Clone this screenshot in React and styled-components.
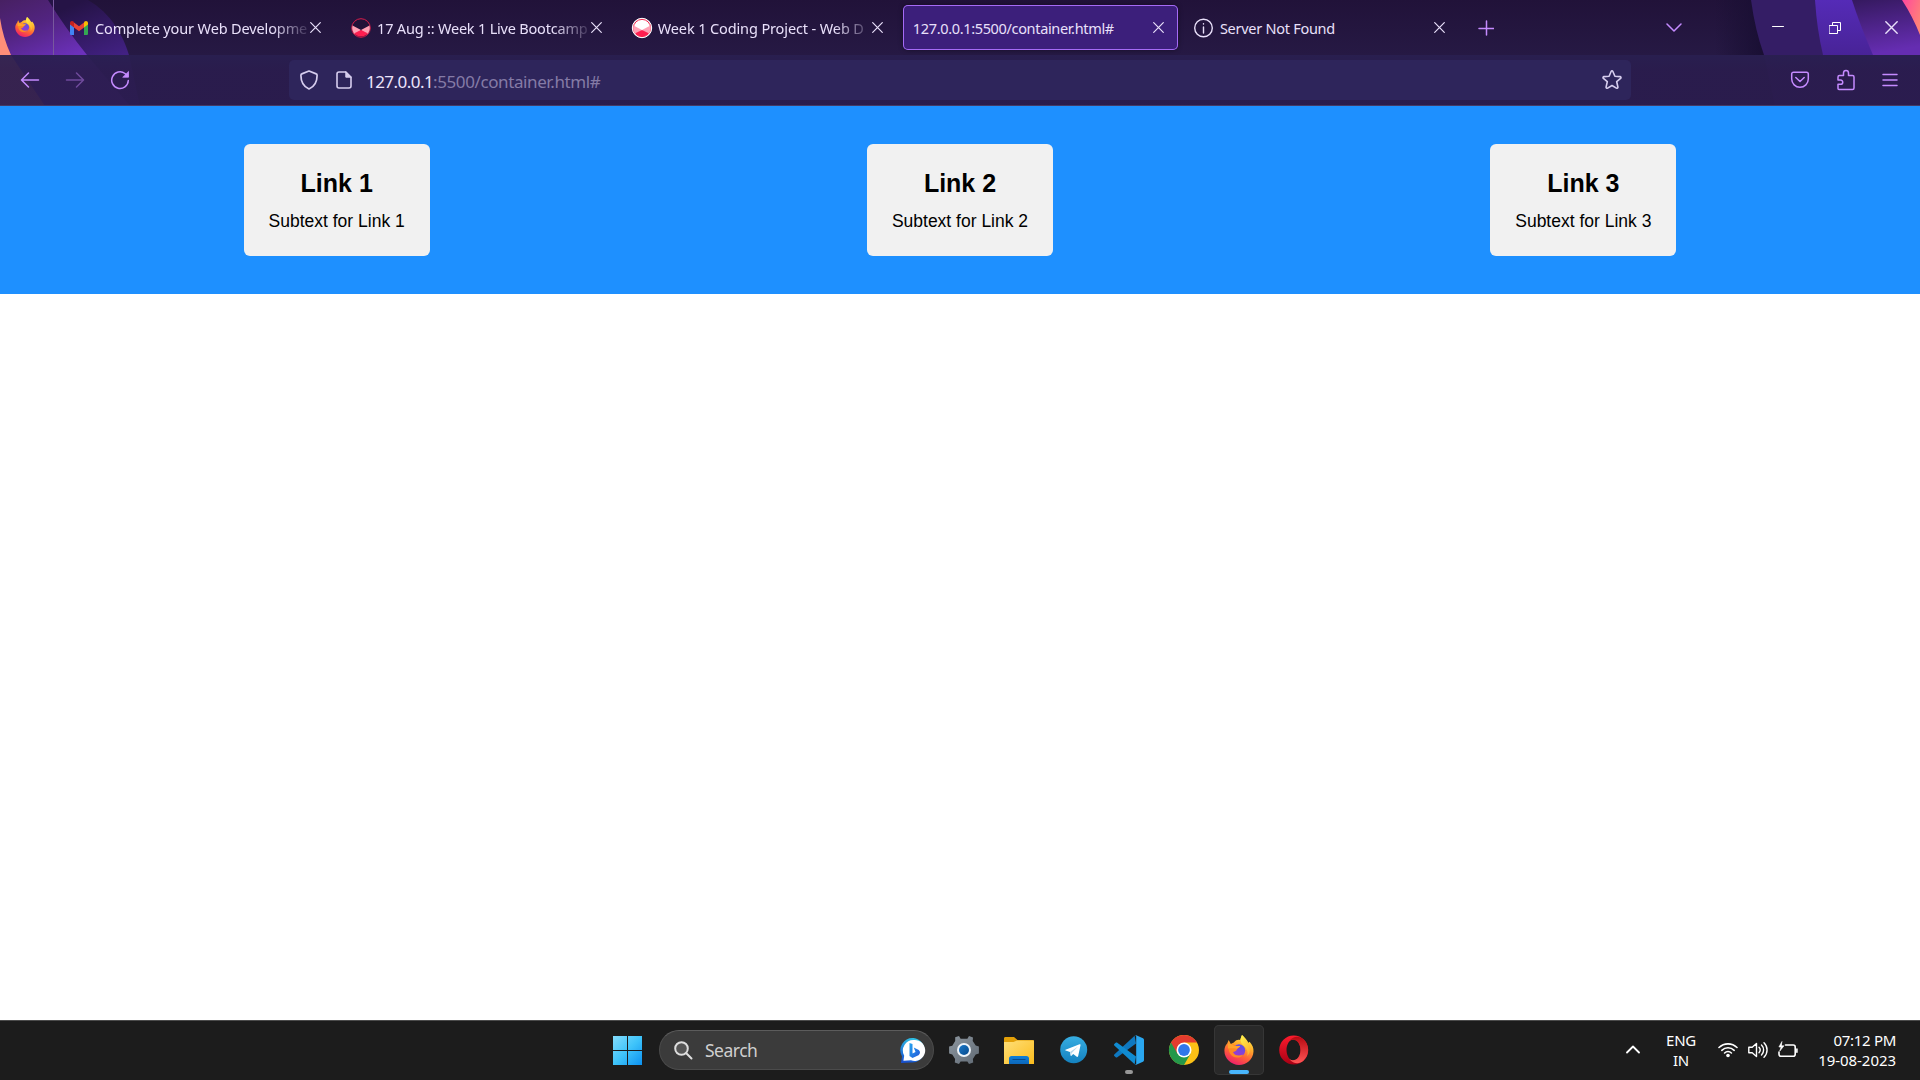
import React from "react";
import styled, { createGlobalStyle } from "styled-components";

const GlobalStyle = createGlobalStyle`
  * { box-sizing: border-box; }
  html, body { margin: 0; padding: 0; background: #fff; overflow: hidden; }
  body { font-family: "Noto Sans", "Open Sans", sans-serif; }
`;

const Screen = styled.div`
  width: 1920px;
  height: 1080px;
  display: flex;
  flex-direction: column;
  background: #fff;
`;

/* ---------- browser chrome ---------- */

const Chrome = styled.header`
  position: relative;
  isolation: isolate;
  height: 106px;
  display: flex;
  flex-direction: column;
  background: linear-gradient(#211239 0, #261944 55px);
`;

const ThemeArt = styled.svg`
  position: absolute;
  inset: 0;
  z-index: -1;
`;

const TabStrip = styled.div`
  height: 55px;
  display: flex;
  align-items: center;
`;

const ViewButton = styled.div`
  width: 54px;
  height: 55px;
  padding: 1px 0 2px 15px;
  display: flex;
  align-items: center;
  border-right: 1px solid #78589e;
`;

const Tabs = styled.div`
  display: flex;
  gap: 6px;
  margin-left: 5.5px;
`;

const Tab = styled.div`
  width: 275.1px;
  height: 45px;
  padding: 0 9.5px 0 10px;
  display: flex;
  align-items: center;
  border-radius: 5px;
  color: #e9e0fa;
  background: ${(p) => (p.$active ? "#3c1f7b" : "transparent")};
  box-shadow: ${(p) => (p.$active ? "inset 0 0 0 1px #a56bf5, 0 0 5px rgba(0,0,0,.4)" : "none")};
`;

const TabIcon = styled.span`
  width: 20px;
  height: 20px;
  margin-right: ${(p) => p.$gap}px;
  flex: none;
  display: flex;
  align-items: center;
`;

const TabLabel = styled.span`
  flex: 1;
  min-width: 0;
  margin-right: -3px;
  overflow: hidden;
  white-space: nowrap;
  font-size: 14.5px;
  line-height: 22px;
  letter-spacing: ${(p) => p.$spacing}px;
  ${(p) => p.$fade && "mask-image: linear-gradient(to right, #000 calc(100% - 36px), rgba(0,0,0,.12));"}
`;

const TabClose = styled.span`
  width: 20px;
  flex: none;
  display: flex;
  justify-content: center;
`;

const StripControls = styled.div`
  flex: 1;
  display: flex;
  align-items: center;
`;

const Slot = styled.span`
  width: ${(p) => p.$w}px;
  margin-left: ${(p) => p.$left || 0}px;
  flex: none;
  display: flex;
  align-items: center;
  justify-content: center;
`;

const NavBar = styled.div`
  height: 51px;
  padding-left: 8px;
  display: flex;
  align-items: center;
  background: linear-gradient(to bottom, rgba(41,31,80,.94), rgba(42,28,77,.94) 16px);
  border-bottom: 1px solid #443a66;
`;

const UrlBar = styled.div`
  width: 1342px;
  height: 40px;
  margin-left: 159px;
  padding: 0 9px 0 11px;
  display: flex;
  align-items: center;
  border-radius: 5px;
  background: #2e255b;
`;

const Url = styled.span`
  flex: 1;
  margin-left: 14px;
  padding-top: 3px;
  font-size: 17px;
  line-height: 24px;
  letter-spacing: -0.4px;
  color: #857ba6;
`;

const Host = styled.span`
  letter-spacing: -0.55px;
  color: #ece4fb;
`;

/* ---------- page ---------- */

const LinkBar = styled.nav`
  height: 188px;
  padding: 38px 243.67px;
  display: flex;
  justify-content: space-between;
  background: #1e90ff;
  font-family: "Liberation Sans", Arial, sans-serif;
  color: #000;
`;

const Card = styled.a`
  width: 186px;
  height: 112px;
  padding: 25px 0;
  border-radius: 6px;
  background: #f1f1f1;
  text-align: center;
`;

const CardTitle = styled.div`
  font-size: 25px;
  line-height: 29px;
  font-weight: 700;
  margin-bottom: 13px;
`;

const CardText = styled.div`
  font-size: 17.5px;
  line-height: 20px;
  white-space: nowrap;
`;

const Page = styled.main`
  flex: 1;
  background: #fff;
`;

/* ---------- taskbar ---------- */

const TaskBar = styled.footer`
  height: 60px;
  padding-left: 603px;
  display: flex;
  align-items: center;
  background: #1c1c1c;
  box-shadow: inset 0 1px 0 #4b4b4b;
  color: #fff;
`;

const AppCell = styled.div`
  width: ${(p) => (p.$first ? 49 : 50)}px;
  height: 50px;
  margin-left: ${(p) => (p.$first ? 0 : 5)}px;
  padding-top: ${(p) => (p.$first ? 11 : 10)}px;
  display: flex;
  flex-direction: column;
  align-items: center;
  border-radius: 5px;
  background: ${(p) => (p.$active ? "#292929" : "transparent")};
  box-shadow: ${(p) => (p.$active ? "inset 0 0 0 1px #363636" : "none")};
`;

const Indicator = styled.span`
  width: ${(p) => (p.$active ? 20 : 8)}px;
  height: 4px;
  margin-top: 5px;
  border-radius: 2px;
  background: ${(p) => (p.$active ? "#48b5fb" : "#979797")};
`;

const SearchBox = styled.div`
  width: 275px;
  height: 40px;
  margin-left: 7px;
  padding: 0 7px 0 14px;
  display: flex;
  align-items: center;
  border-radius: 20px;
  border: 1px solid #4b4b4b;
  border-top-color: #5c5c5c;
  background: #3b3b3b;
`;

const SearchLabel = styled.span`
  flex: 1;
  margin-left: 12px;
  font-size: 17.5px;
  line-height: 24px;
  letter-spacing: -0.5px;
  color: #cfcfcf;
`;

const Tray = styled.div`
  margin-left: auto;
  padding-right: 24px;
  padding-bottom: 1px;
  display: flex;
  align-items: center;
  font-size: 15px;
  line-height: 20px;
`;

const TrayText = styled.div`
  width: ${(p) => p.$w}px;
  margin-left: ${(p) => p.$left}px;
  white-space: nowrap;
  letter-spacing: ${(p) => p.$spacing}px;
  display: flex;
  flex-direction: column;
  align-items: ${(p) => (p.$align === "right" ? "flex-end" : "center")};
`;

const DateText = styled.span`
  letter-spacing: -0.05px;
`;

/* ---------- drawings ---------- */

const Line = styled.svg`
  display: block;
  flex: none;
  fill: none;
  stroke: ${(p) => p.$c || "#c58bff"};
  stroke-width: ${(p) => p.$sw || 1.5};
  stroke-linecap: round;
  stroke-linejoin: round;
`;

const Art = styled.svg`
  display: block;
  flex: none;
  overflow: visible;
`;

function Background() {
  return (
    <ThemeArt width="1920" height="106" viewBox="0 0 1920 106">
      <defs>
        <linearGradient id="bgA" x1="0" y1="0" x2="0.5" y2="1">
          <stop offset="0" stopColor="#472062" />
          <stop offset="0.3" stopColor="#522481" />
          <stop offset="0.65" stopColor="#6c31bc" />
        </linearGradient>
        <linearGradient id="bgB" gradientUnits="userSpaceOnUse" x1="85" y1="0" x2="110" y2="60">
          <stop offset="0" stopColor="#251346" />
          <stop offset="1" stopColor="#422183" />
        </linearGradient>
        <linearGradient id="bgC" x1="0" y1="0" x2="0" y2="1">
          <stop offset="0" stopColor="#552bb7" />
          <stop offset="1" stopColor="#482397" />
        </linearGradient>
        <linearGradient id="bgD" x1="0" y1="0" x2="0.2" y2="1">
          <stop offset="0" stopColor="#35195f" />
          <stop offset="1" stopColor="#652db1" />
        </linearGradient>
        <linearGradient id="bgE" x1="0" y1="0" x2="1" y2="0.6">
          <stop offset="0" stopColor="#ff479d" />
          <stop offset="1" stopColor="#ff8278" />
        </linearGradient>
        <linearGradient id="bgShade" x1="0" y1="0" x2="1" y2="0">
          <stop offset="0" stopColor="#180e32" stopOpacity="0" />
          <stop offset="1" stopColor="#180e32" />
        </linearGradient>
      </defs>
      <path d="M88 0C112 14 123 36 129 55L140 106H0V0Z" fill="url(#bgB)" />
      <path d="M48 0Q66 29 87 55L130 106H0V0Z" fill="url(#bgA)" />
      <path d="M0 18Q3 38 11 55L45 106H0Z" fill="#ff8e78" />
      <path d="M1715 0H1755L1768 55H1715Z" fill="url(#bgShade)" />
      <path d="M1751 0Q1755 30 1764 55L1775 106H1920V0Z" fill="#341d65" />
      <path d="M1815 0Q1817 30 1823 55H1920V0Z" fill="url(#bgC)" />
      <path d="M1852 0Q1860 25 1873 55H1920V0Z" fill="url(#bgD)" />
      <path d="M1902 0Q1913 17 1920 35V0Z" fill="url(#bgE)" />
    </ThemeArt>
  );
}

function FirefoxIcon({ size, id }) {
  return (
    <Art width={size} height={size} viewBox="0 0 30 30">
      <defs>
        <linearGradient id={id + "o"} x1="0.75" y1="0" x2="0.3" y2="1">
          <stop offset="0" stopColor="#fff14a" />
          <stop offset="0.35" stopColor="#ffae2b" />
          <stop offset="0.65" stopColor="#ff6236" />
          <stop offset="1" stopColor="#ed1a6e" />
        </linearGradient>
        <linearGradient id={id + "p"} x1="0.7" y1="0" x2="0.3" y2="1">
          <stop offset="0" stopColor="#5651e4" />
          <stop offset="1" stopColor="#a438cd" />
        </linearGradient>
        <linearGradient id={id + "y"} x1="0" y1="0" x2="0.6" y2="1">
          <stop offset="0" stopColor="#fff44f" />
          <stop offset="1" stopColor="#ffb52d" />
        </linearGradient>
      </defs>
      <path d="M3.2 8.5 4.7 5l2.1 4 3-1.4C12 4.8 14 4.6 16 5l2-5c2 2 5 4.500 6.200 7.800l1.400-1C28.500 10 29.700 13 29.500 16.500 29 24.500 22.700 30 15 30S.4 23.800.4 15.800C.4 12.900 1.300 10.600 3.200 8.500Z" fill={`url(#${id}o)`} />
      <path d="M18 0c2 2.300 5 4.600 6.300 8.500 2.700 5.500 2.200 9-1 12.500 1.200-4.500-.8-8-4-10.500C16.800 8.200 15.600 4.500 18 0Z" fill={`url(#${id}y)`} />
      <circle cx="15" cy="15.500" r="6.200" fill={`url(#${id}p)`} />
      <path d="M4.700 10.500c2.500-2 5.500-1.500 7.400.5h4c-.2 1.700-2.700 2-3.200 3.200-.2 2-2.600 2.200-4 2.800 1.500 3.800 6.300 4.500 10.400 2.400-3 4.500-10.500 4.300-13.200-.8C4.500 16 4.200 13 4.700 10.500Z" fill="#ff8a22" />
      <path d="M4 8.500c2.600.2 4.700 1 6.500 2.500h5.600c-.5 1.500-2.600 1.900-3.200 2.700-2.800-.4-5.800-.5-8.900-.2Z" fill="#ffa32c" />
    </Art>
  );
}

const GmailIcon = () => (
  <Art width="18" height="14" viewBox="0 0 18 14">
    <path d="M0 2.500V12.700C0 13.500.5 14 1.300 14H4V6Z" fill="#4285f4" />
    <path d="M14 6v8h2.700c.8 0 1.300-.5 1.300-1.300V2.500Z" fill="#34a853" />
    <path d="M14 1.500V6.500L18 3.500V2C18 .1 16-.6 14.500.5Z" fill="#fbbc04" />
    <path d="M4 6.500v-5L9 5.300l5-3.800v5l-5 3.800Z" fill="#ea4335" />
    <path d="M0 2v1.500l4 3v-5L3.500.5C2-.6 0 .1 0 2Z" fill="#c5221f" />
  </Art>
);

const CourseIcon = ({ light }) => (
  <Art width="20" height="20" viewBox="0 0 20 20">
    <circle cx="10" cy="10" r={light ? 9.700 : 9.300} fill={light ? "#fff" : "#211238"} stroke={light ? "#fff" : "#d91d4b"} strokeWidth="1" />
    {light && <circle cx="10" cy="10" r="8.600" fill="#fff" stroke="#f4284f" strokeWidth="1" />}
    <path d="M1.500 7.500 10 12l8.500-4.500a9 9 0 0 1-2.600 9L10 12l-5.900 4.500a9 9 0 0 1-2.600-9Z" fill="#ffa0b4" />
    <path d="M3.300 15.300 10 12l6.700 3.300a8.600 8.600 0 0 1-13.400 0Z" fill="#ff1e50" />
  </Art>
);

const InfoIcon = () => (
  <Line width="20" height="20" viewBox="0 0 20 20" $c="#e9e0fa" $sw={1.4}>
    <circle cx="9.500" cy="10" r="8.800" />
    <path d="M9.500 9v6M9.500 5.800v.3" />
  </Line>
);

const CloseIcon = ({ size = 11 }) => (
  <Line width={size} height={size} viewBox="0 0 11 11" $c="#e9e0fa" $sw={1.2}>
    <path d="M.7.7l9.600 9.600M10.300.7L.7 10.300" />
  </Line>
);

function GearIcon() {
  return (
    <Art width="30" height="30" viewBox="0 0 30 30">
      <defs>
        <linearGradient id="gear" x1="0" y1="0" x2="1" y2="1">
          <stop offset="0" stopColor="#8d969f" />
          <stop offset="1" stopColor="#606a74" />
        </linearGradient>
        <linearGradient id="gearBlue" x1="0" y1="0" x2="1" y2="1">
          <stop offset="0" stopColor="#1b78c8" />
          <stop offset="1" stopColor="#064a8c" />
        </linearGradient>
      </defs>
      <path d="M6.200 2.200 10 1l1.600 2.800h6.800L20 1l4 1.400-.3 3.500 3 4.700 3.200.9v7l-3.200.9-2.800 4.600.3 3.400L20 29l-1.600-2.600h-6.800L10 29l-4.200-1.600.3-3.400-2.800-4.500-3.200-.9v-7l3.200-.9 2.900-4.700Z" fill="url(#gear)" />
      <circle cx="15" cy="15" r="7" fill="#eef4fa" />
      <circle cx="15" cy="15" r="5" fill="url(#gearBlue)" />
    </Art>
  );
}

function FolderIcon() {
  return (
    <Art width="30" height="30" viewBox="0 0 30 30">
      <defs>
        <linearGradient id="folder" x1="0" y1="0" x2="1" y2="1">
          <stop offset="0" stopColor="#ffdf78" />
          <stop offset="1" stopColor="#fbbc1d" />
        </linearGradient>
        <linearGradient id="tray" x1="0" y1="0" x2="0" y2="1">
          <stop offset="0" stopColor="#0d7fd9" />
          <stop offset="1" stopColor="#0d67ba" />
        </linearGradient>
      </defs>
      <path d="M0 3.500C0 2.500.6 2 1.500 2H10l3.500 3H28.500c1 0 1.500.5 1.500 1.500V12H0Z" fill="#e3a008" />
      <path d="M0 7h9.500L13 5.500h17V29H0Z" fill="url(#folder)" />
      <path d="M5 29v-5.500C5 22 6 21 7.500 21h15c1.500 0 2.500 1 2.500 2.500V29Z" fill="url(#tray)" />
      <path d="M8.500 24.500h13" stroke="#084a8c" strokeWidth="1" />
    </Art>
  );
}

function TelegramIcon() {
  return (
    <Art width="30" height="30" viewBox="0 0 30 30">
      <defs>
        <linearGradient id="tg" x1="0" y1="0" x2="0" y2="1">
          <stop offset="0" stopColor="#37aee2" />
          <stop offset="1" stopColor="#1481bf" />
        </linearGradient>
      </defs>
      <circle cx="14.700" cy="14.700" r="13.500" fill="url(#tg)" />
      <path d="M6.500 14.800 20.500 9.200c.7-.2 1.200.2 1 1l-2.300 10.900c-.2.800-.8 1-1.400.6l-3.600-2.700-1.800 1.800c-.4.300-.8.200-.8-.3l-.6-3.500-4.400-1.400c-.6-.2-.6-.6-.1-.8Z" fill="#fff" />
      <path d="M11 17 19 11.500 12.600 18.200l-.5 2.200Z" fill="#b9d8ea" />
    </Art>
  );
}

const VsCodeIcon = () => (
  <Art width="30" height="30" viewBox="0 0 30 30">
    <path d="M22 8.500 3.300 22.300c-.5.400-1.100.4-1.600 0L.3 21c-.5-.5-.5-1.100 0-1.600L20.600.7Z" fill="#0f78bf" />
    <path d="M22 21.500 3.300 7.700c-.5-.4-1.100-.4-1.600 0L.3 9c-.5.500-.5 1.100 0 1.600L20.600 29.300Z" fill="#108bd1" />
    <path d="M22.200 29.800c-.8.300-1.400 0-1.900-.5.700.7 1.900.2 1.900-.8V1.500c0-1-1.200-1.500-1.900-.8.500-.5 1.200-.8 1.900-.5l6.200 2.900c.9.400 1.600 1 1.600 2v19.800c0 1-.7 1.600-1.600 2Z" fill="#2aa7f0" />
  </Art>
);

const ChromeIcon = () => (
  <Art width="30" height="30" viewBox="0 0 30 30">
    <circle cx="15" cy="15" r="15" fill="#fbc116" />
    <path d="M15 15 2 7.500A15 15 0 0 0 15 30l6.500-11.300Z" fill="#24984a" />
    <path d="M15 15 8.500 18.700 2 7.500A15 15 0 0 1 28 7.500H15Z" fill="#e33b2e" />
    <circle cx="15" cy="15" r="7.500" fill="#fff" />
    <circle cx="15" cy="15" r="5.900" fill="#3077ea" />
  </Art>
);

function OperaIcon() {
  return (
    <Art width="30" height="30" viewBox="0 0 30 30">
      <defs>
        <linearGradient id="opA" x1="0" y1="0" x2="0" y2="1">
          <stop offset="0" stopColor="#ff1b2d" />
          <stop offset="1" stopColor="#a70014" />
        </linearGradient>
        <linearGradient id="opB" x1="0" y1="0" x2="0" y2="1">
          <stop offset="0" stopColor="#b80a12" />
          <stop offset="1" stopColor="#ff5555" />
        </linearGradient>
      </defs>
      <path fillRule="evenodd" d="M14.700.5a14.500 14.500 0 1 0 0 29 14.500 14.500 0 0 0 0-29ZM14.500 4.500c3.900 0 7 4.700 7 10.500s-3.100 10.500-7 10.500-7-4.700-7-10.500 3.100-10.500 7-10.500Z" fill="url(#opA)" />
      <path d="M10.500 5.800C14.500.8 20.500.6 24.700 4.600a14.500 14.500 0 0 1 0 20.800c-4.200 4-10.200 3.800-14.200-1.200 5 3.200 11-1 11-9.200s-6-12.400-11-9.200Z" fill="url(#opB)" />
    </Art>
  );
}

function WindowsIcon() {
  return (
    <Art width="29" height="29" viewBox="0 0 29 29">
      <defs>
        <linearGradient id="win" gradientUnits="userSpaceOnUse" x1="0" y1="0" x2="29" y2="29">
          <stop offset="0" stopColor="#84dcfc" />
          <stop offset="0.5" stopColor="#3fc4fa" />
          <stop offset="1" stopColor="#0c91f0" />
        </linearGradient>
      </defs>
      <path d="M0 0h14v14H0ZM15 0h14v14H15ZM0 15h14v14H0ZM15 15h14v14H15Z" fill="url(#win)" />
    </Art>
  );
}

function BingIcon() {
  return (
    <Art width="25" height="25" viewBox="0 0 25 25">
      <defs>
        <linearGradient id="bingRing" x1="0.5" y1="0" x2="0.2" y2="1">
          <stop offset="0" stopColor="#2fc1e6" />
          <stop offset="1" stopColor="#174ed0" />
        </linearGradient>
        <linearGradient id="bingMark" x1="0" y1="0" x2="1" y2="1">
          <stop offset="0" stopColor="#25a5f0" />
          <stop offset="1" stopColor="#2458d8" />
        </linearGradient>
      </defs>
      <path d="M12.500 0A12.300 12.300 0 1 1 10 24.500L0 25l1-6.500A12.400 12.400 0 0 1 12.500 0Z" fill="url(#bingRing)" />
      <path d="M13 2A10.500 10.500 0 1 1 10 22.300L2.400 22.700l.8-5A10.600 10.600 0 0 1 13 2Z" fill="#fff" />
      <path d="M8.500 5 11.500 6v9.500l3-1.500-1.700-4.500 5 2.500c1.800 1.500 1.500 4-.3 5.200L11.500 20l-3-2Z" fill="url(#bingMark)" />
    </Art>
  );
}

/* ---------- data ---------- */

const TABS = [
  { label: "Complete your Web Developme", icon: <GmailIcon />, fade: true, spacing: -0.13, gap: 5.5 },
  { label: "17 Aug :: Week 1 Live Bootcamp", icon: <CourseIcon />, fade: true, spacing: -0.2, gap: 6.5 },
  { label: "Week 1 Coding Project - Web D", icon: <CourseIcon light />, fade: true, spacing: -0.12, gap: 6 },
  { label: "127.0.0.1:5500/container.html#", active: true, spacing: -0.34 },
  { label: "Server Not Found", icon: <InfoIcon />, spacing: -0.27, gap: 6 },
];

const LINKS = [1, 2, 3];

const APPS = [
  { name: "settings", icon: <GearIcon /> },
  { name: "files", icon: <FolderIcon /> },
  { name: "telegram", icon: <TelegramIcon /> },
  { name: "code", icon: <VsCodeIcon />, running: true },
  { name: "chrome", icon: <ChromeIcon /> },
  { name: "firefox", icon: <FirefoxIcon size={30} id="fxTask" />, active: true },
  { name: "opera", icon: <OperaIcon /> },
];

export default function App() {
  return (
    <Screen>
      <GlobalStyle />
      <Chrome>
        <Background />
        <TabStrip>
          <ViewButton>
            <FirefoxIcon size={20} id="fxTab" />
          </ViewButton>
          <Tabs>
            {TABS.map((t) => (
              <Tab key={t.label} $active={t.active}>
                {t.icon && <TabIcon $gap={t.gap}>{t.icon}</TabIcon>}
                <TabLabel $fade={t.fade} $spacing={t.spacing}>{t.label}</TabLabel>
                <TabClose><CloseIcon /></TabClose>
              </Tab>
            ))}
          </Tabs>
          <StripControls>
            <Slot $w={16} $left={19}>
              <Line width="16" height="16" viewBox="0 0 16 16"><path d="M8.500 1v14M1 8.500h15" /></Line>
            </Slot>
            <Slot $w={16} $left={172}>
              <Line width="16" height="10" viewBox="0 0 16 10"><path d="M1 1l7 7 7-7" /></Line>
            </Slot>
            <Slot $w={12} $left={90}>
              <Line width="12" height="12" viewBox="0 0 12 12" $c="#fff" $sw={1}><path d="M.5 4.500h11" /></Line>
            </Slot>
            <Slot $w={12} $left={45}>
              <Line width="12" height="12" viewBox="0 0 12 12" $c="#fff" $sw={1}><path d="M.5 3.500h8v8h-8ZM3.500 3.500v-3h8v8h-3" /></Line>
            </Slot>
            <Slot $w={13} $left={44}>
              <CloseIcon size={13} />
            </Slot>
          </StripControls>
        </TabStrip>
        <NavBar>
          <Slot $w={20} $left={12}>
            <Line width="20" height="18" viewBox="0 0 20 18"><path d="M18.500 9H2M8.500 2L1.500 9l7 7" /></Line>
          </Slot>
          <Slot $w={20} $left={25}>
            <Line width="20" height="18" viewBox="0 0 20 18" $c="#6f4a9c"><path d="M1.500 9H18M11.500 2l7 7-7 7" /></Line>
          </Slot>
          <Slot $w={20} $left={25}>
            <Line width="20" height="20" viewBox="0 0 20 20">
              <path d="M18.300 10.500A8.300 8.300 0 1 1 15 3.500l1.800 1.700" />
              <path d="M18.500 1.800v5.400h-5.400Z" fill="#c58bff" stroke="#c58bff" strokeWidth="0.800" />
            </Line>
          </Slot>
          <UrlBar>
            <Line width="18" height="20" viewBox="0 0 18 20" $c="#d6cdee" $sw={1.7}>
              <path d="M9 1 1.800 3.900C1 4.200.9 4.700.9 5.400c0 6.200 2.500 11 8.100 13.600 5.600-2.600 8.100-7.400 8.100-13.600 0-.7-.1-1.200-.9-1.500Z" />
            </Line>
            <Slot $w={16} $left={18}>
              <Line width="16" height="18" viewBox="0 0 16 18" $c="#d6cdee" $sw={1.6}>
                <path d="M9.800 1H3C1.800 1 1 1.800 1 3v12c0 1.200.8 2 2 2h10c1.200 0 2-.8 2-2V6.200Z" />
                <path d="M9.800 1v5.200H15Z" fill="#d6cdee" strokeWidth="1" />
              </Line>
            </Slot>
            <Url><Host>127.0.0.1</Host>:5500/container.html#</Url>
            <Line width="20" height="20" viewBox="0 0 20 20" $c="#d6cdee" $sw={1.6}>
              <path d="M9.100 1.500c.4-.8 1.400-.8 1.800 0l2 4.700 5.100.4c.9.100 1.300 1.100.6 1.700l-3.900 3.400 1.200 5.300c.2.900-.7 1.500-1.500 1.100L10 15.500l-4.400 2.600c-.8.400-1.700-.2-1.500-1.100l1.200-5.300-3.900-3.400c-.7-.6-.3-1.600.6-1.700l5.100-.4Z" />
            </Line>
          </UrlBar>
          <Slot $w={20} $left={159}>
            <Line width="20" height="18" viewBox="0 0 20 18">
              <path d="M3.500 1.200h13c1.200 0 1.800.7 1.800 1.800v5A8.300 8.300 0 0 1 1.700 8V3c0-1.100.7-1.800 1.800-1.800ZM5.800 6.500 10 10.500l4.200-4" />
            </Line>
          </Slot>
          <Slot $w={20} $left={26}>
            <Line width="20" height="22" viewBox="0 0 20 22">
              <path d="M3 20.500c-.8 0-1-.4-1-1v-4.200h2.500c3 0 3-4.300 0-4.300H2V8c0-1 .6-1.500 1.500-1.500h4V4c0-3.500 5-3.500 5 0v2.500h4c1 0 1.500.5 1.500 1.500v11c0 1-.5 1.500-1.500 1.500Z" />
            </Line>
          </Slot>
          <Slot $w={16} $left={26}>
            <Line width="16" height="14" viewBox="0 0 16 14"><path d="M1 1.500h14M1 7h14M1 12.500h14" /></Line>
          </Slot>
        </NavBar>
      </Chrome>

      <LinkBar>
        {LINKS.map((n) => (
          <Card key={n}>
            <CardTitle>Link {n}</CardTitle>
            <CardText>Subtext for Link {n}</CardText>
          </Card>
        ))}
      </LinkBar>
      <Page />

      <TaskBar>
        <AppCell $first><WindowsIcon /></AppCell>
        <SearchBox>
          <Line width="19" height="19" viewBox="0 0 19 19" $c="#dedede" $sw={2}>
            <circle cx="7.500" cy="7.500" r="6.300" fill="#555" /><path d="M12.300 12.300l5.200 5.200" />
          </Line>
          <SearchLabel>Search</SearchLabel>
          <BingIcon />
        </SearchBox>
        {APPS.map((a) => (
          <AppCell key={a.name} $active={a.active}>
            {a.icon}
            {(a.active || a.running) && <Indicator $active={a.active} />}
          </AppCell>
        ))}
        <Tray>
          <Line width="14" height="9" viewBox="0 0 14 9" $c="#fff" $sw={1.8}><path d="M1 7.500l6-6 6 6" /></Line>
          <TrayText $w={34} $left={24} $align="center" $spacing={-0.3}>
            <span>ENG</span>
            <span>IN</span>
          </TrayText>
          <Slot $w={20} $left={20}>
            <Line width="20" height="16" viewBox="0 0 20 16" $c="#fff" $sw={1.6}>
              <path d="M1 5.500a13 13 0 0 1 18 0M3.800 8.300a9 9 0 0 1 12.400 0M6.600 11a5 5 0 0 1 6.800 0" />
              <circle cx="10" cy="13.500" r="1.800" fill="#fff" stroke="none" />
            </Line>
          </Slot>
          <Slot $w={20} $left={10}>
            <Line width="20" height="18" viewBox="0 0 20 18" $c="#fff" $sw={1.4}>
              <path d="M.8 6.300h3.400L8.500 2.500v13L4.200 11.700H.8Z" />
              <path d="M11 6.300a4 4 0 0 1 0 5.400M13.500 4a7 7 0 0 1 0 10" />
              <path d="M16 1.800a10 10 0 0 1 0 14.400" />
            </Line>
          </Slot>
          <Slot $w={20} $left={10}>
            <Line width="20" height="18" viewBox="0 0 20 18" $c="#fff" $sw={1.6}>
              <path d="M7.500 4h7.700c1.200 0 2 .8 2 2v7.300c0 1.200-.8 2-2 2H3c-1.200 0-2-.6-2-2V11" />
              <path d="M18.900 8v3.300" />
              <path d="M3.800.8.900 6h2.200L1.700 10.200 6 4.800H3.600Z" fill="#fff" strokeWidth="0.600" />
            </Line>
          </Slot>
          <TrayText $w={78} $left={20} $align="right" $spacing={-0.3}>
            <span>07:12 PM</span>
            <DateText>19-08-2023</DateText>
          </TrayText>
        </Tray>
      </TaskBar>
    </Screen>
  );
}
